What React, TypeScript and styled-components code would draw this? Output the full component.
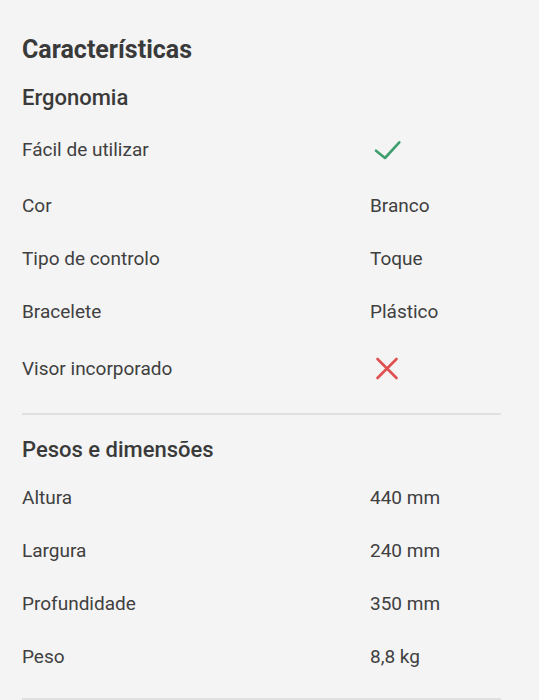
import styled, { createGlobalStyle } from 'styled-components';

const GlobalStyle = createGlobalStyle`
  html, body {
    margin: 0;
    padding: 0;
    background: #f4f4f4;
  }
  body {
    font-family: Roboto, "Noto Sans", Arial, sans-serif;
    color: #404040;
  }
`;

const Page = styled.div`
  padding: 34px 38px 0 22px;
  background: #f4f4f4;
  min-height: 700px;
  box-sizing: border-box;
`;

const Title = styled.h1`
  margin: 0 0 18px;
  font-size: 25px;
  line-height: 32px;
  font-weight: 700;
  color: #3a3a3a;
`;

const SectionTitle = styled.h2`
  margin: 0 0 7px;
  font-size: 22px;
  line-height: 28px;
  font-weight: 500;
  color: #3a3a3a;
`;

const Section = styled.section`
  padding-bottom: 15px;
  border-bottom: 2px solid #e0e0e0;
  & + & {
    padding-top: 21px;
  }
`;

const Row = styled.div`
  display: grid;
  grid-template-columns: 348px 1fr;
  align-items: center;
  padding: 14px 0;
  font-size: 19px;
  line-height: 25px;
`;

const Label = styled.span`
  color: #404040;
`;

const Value = styled.span`
  display: flex;
  align-items: center;
  color: #404040;
`;

const Icon = styled.svg`
  display: block;
  width: 32px;
  height: 32px;
`;

const Check = () => (
  <Icon viewBox="0 0 32 32" fill="none">
    <path
      d="M6 17.7 L15 25 L29.3 9.3"
      stroke="#3f9e6e"
      strokeWidth="2.6"
      strokeLinecap="round"
      strokeLinejoin="round"
    />
  </Icon>
);

const Cross = () => (
  <Icon viewBox="0 0 32 32" fill="none">
    <path
      d="M7.5 7 L26.5 26 M26.5 7 L7.5 26"
      stroke="#e05050"
      strokeWidth="2.6"
      strokeLinecap="round"
    />
  </Icon>
);

type Item = { label: string; value: React.ReactNode };

const ergonomia: Item[] = [
  { label: 'Fácil de utilizar', value: <Check /> },
  { label: 'Cor', value: 'Branco' },
  { label: 'Tipo de controlo', value: 'Toque' },
  { label: 'Bracelete', value: 'Plástico' },
  { label: 'Visor incorporado', value: <Cross /> }
];

const pesos: Item[] = [
  { label: 'Altura', value: '440 mm' },
  { label: 'Largura', value: '240 mm' },
  { label: 'Profundidade', value: '350 mm' },
  { label: 'Peso', value: '8,8 kg' }
];

const SpecSection = ({ title, items }: { title: string; items: Item[] }) => (
  <Section>
    <SectionTitle>{title}</SectionTitle>
    {items.map((item) => (
      <Row key={item.label}>
        <Label>{item.label}</Label>
        <Value>{item.value}</Value>
      </Row>
    ))}
  </Section>
);

export default function App() {
  return (
    <>
      <GlobalStyle />
      <Page>
        <Title>Características</Title>
        <SpecSection title="Ergonomia" items={ergonomia} />
        <SpecSection title="Pesos e dimensões" items={pesos} />
      </Page>
    </>
  );
}
